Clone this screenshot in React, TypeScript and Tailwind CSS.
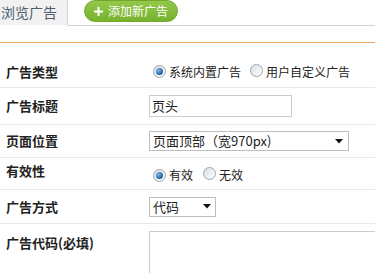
import React from "react";

const font = { fontFamily: '"Noto Sans CJK SC", "Liberation Sans", sans-serif' };

function Radio({ checked }: { checked?: boolean }) {
  return (
    <span className="relative inline-flex h-[13px] w-[13px] shrink-0 items-center justify-center rounded-full border border-[#9aa6b2] bg-[linear-gradient(135deg,#d9dde2,#ffffff)]">
      {checked && (
        <span className="h-[7px] w-[7px] rounded-full bg-[radial-gradient(circle_at_35%_35%,#7fb6ea,#1d5c9c_70%)]" />
      )}
    </span>
  );
}

function Arrow() {
  return (
    <svg width="8" height="5" viewBox="0 0 8 5">
      <path d="M0 0 L8 0 L4 4.5 Z" fill="#111" />
    </svg>
  );
}

export default function App() {
  return (
    <div className="h-[273px] w-[375px] overflow-hidden bg-white text-[#222]" style={font}>
      {/* header */}
      <div className="flex h-[26px] items-start">
        <div className="h-[25px] w-[68px] shrink-0 border-r border-[#cfcfcf] bg-[#f1f1f1] pl-[1px] text-[14px] leading-[25px] text-[#4d5c6e]">
          浏览广告
        </div>
        <div className="flex h-[26px] flex-1 items-start border-b border-[#d2d2d2]">
          <div className="ml-[16px] flex h-[22px] w-[94px] items-center rounded-full border border-[#72a82c] bg-[linear-gradient(#93c84a,#78b22e)] pl-[9px] text-[12px] text-white">
            <svg width="9" height="9" viewBox="0 0 9 9" className="mr-[5px]">
              <path d="M3.5 0h2v3.5H9v2H5.5V9h-2V5.5H0v-2h3.5z" fill="#fff" />
            </svg>
            <span className="leading-none">添加新广告</span>
          </div>
        </div>
      </div>
      <div className="h-[16px]" />
      <div className="h-[1px] bg-[#e6a860]" />

      {/* rows */}
      <div className="flex h-[45px] items-center border-b border-[#e8e8e8] pt-[13px]">
        <div className="w-[153px] shrink-0 pl-[6px] text-[13px] font-bold">广告类型</div>
        <div className="flex items-center text-[12px]">
          <Radio checked />
          <span className="ml-[3px]">系统内置广告</span>
          <span className="ml-[9px]"><Radio /></span>
          <span className="ml-[3px]">用户自定义广告</span>
        </div>
      </div>

      <div className="flex h-[37px] items-center border-b border-[#e8e8e8]">
        <div className="w-[149px] shrink-0 pl-[6px] text-[13px] font-bold">广告标题</div>
        <div className="flex h-[22px] w-[143px] items-center border border-[#cdcdcd] pl-[2px] text-[13px]">
          页头
        </div>
      </div>

      <div className="flex h-[33px] items-center border-b border-[#e8e8e8]">
        <div className="w-[149px] shrink-0 pl-[6px] text-[13px] font-bold">页面位置</div>
        <div className="flex h-[20px] w-[200px] items-center justify-between border border-[#bdbdbd] pl-[3px] pr-[5px] text-[13px]">
          <span>页面顶部（宽970px)</span>
          <Arrow />
        </div>
      </div>

      <div className="flex h-[32px] border-b border-[#e8e8e8]">
        <div className="w-[153px] shrink-0 pl-[6px] pt-[3px] text-[13px] font-bold">有效性</div>
        <div className="flex items-center pt-[3px] text-[12px]">
          <Radio checked />
          <span className="ml-[3px]">有效</span>
          <span className="ml-[10px]"><Radio /></span>
          <span className="ml-[3px]">无效</span>
        </div>
      </div>

      <div className="flex h-[34px] items-center border-b border-[#e8e8e8]">
        <div className="w-[149px] shrink-0 pl-[6px] text-[13px] font-bold">广告方式</div>
        <div className="flex h-[20px] w-[67px] items-center justify-between border border-[#bdbdbd] pl-[3px] pr-[4px] text-[13px]">
          <span>代码</span>
          <Arrow />
        </div>
      </div>

      <div className="flex">
        <div className="w-[149px] shrink-0 pl-[6px] pt-[9px] text-[13px] font-bold">广告代码(必填)</div>
        <div className="mt-[7px] h-[60px] flex-1 border-l border-t border-[#cdcdcd]" />
      </div>
    </div>
  );
}
